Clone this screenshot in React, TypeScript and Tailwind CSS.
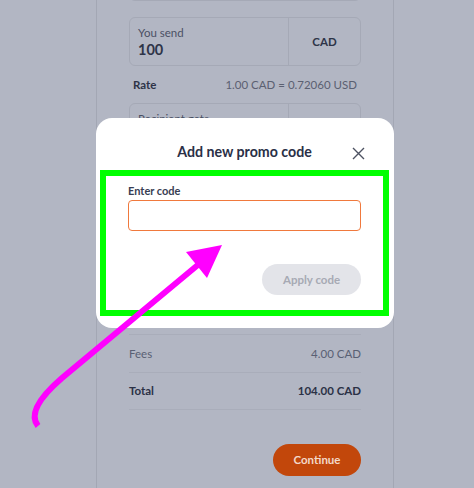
export default function App() {
  return (
    <div className="relative w-[474px] h-[488px] overflow-hidden bg-[#b2b6c3] font-['Lato',sans-serif]">
      {/* page column behind the overlay */}
      <div className="ml-[96px] flex flex-col w-[298px] h-full border-x border-[#a3a7b4] px-[32px]">
        <div className="-mt-[20px] h-[21px] shrink-0 rounded-md border border-[#a5a9b6]"></div>

        <div className="mt-[16px] flex h-[49px] shrink-0 rounded-md border border-[#a5a9b6]">
          <div className="flex flex-1 flex-col justify-center pl-[8px] border-r border-[#a5a9b6]">
            <span className="text-[11.5px] leading-[15px] text-[#4a5063]">You send</span>
            <span className="text-[14.5px] leading-[19px] font-bold text-[#2e3448]">100</span>
          </div>
          <div className="flex w-[71px] items-center justify-center text-[11.5px] font-bold text-[#2e3448]">
            CAD
          </div>
        </div>

        <div className="flex h-[37px] shrink-0 items-center justify-between px-[4px] text-[11.5px]">
          <span className="font-bold text-[#2e3448]">Rate</span>
          <span className="text-[#5b6071]">1.00 CAD = 0.72060 USD</span>
        </div>

        <div className="flex h-[49px] shrink-0 rounded-md border border-[#a5a9b6]">
          <div className="flex flex-1 flex-col justify-center pl-[8px] border-r border-[#a5a9b6]">
            <span className="text-[11.5px] leading-[15px] text-[#4a5063]">Recipient gets</span>
            <span className="text-[14.5px] leading-[19px] font-bold text-[#2e3448]">72.06</span>
          </div>
          <div className="flex w-[71px] items-center justify-center text-[11.5px] font-bold text-[#2e3448]">
            USD
          </div>
        </div>

        <div className="h-[183px] shrink-0 border-b border-[#a9adba]"></div>

        <div className="flex h-[38px] shrink-0 items-center justify-between border-b border-[#a9adba] text-[11.5px] text-[#596073]">
          <span>Fees</span>
          <span>4.00 CAD</span>
        </div>
        <div className="flex h-[37px] shrink-0 items-center justify-between border-b border-[#a9adba] text-[11.5px] font-bold text-[#2b3146]">
          <span>Total</span>
          <span>104.00 CAD</span>
        </div>

        <div className="mt-[34px] flex justify-end">
          <button className="h-[32px] w-[88px] rounded-full bg-[#c2470b] text-[11.5px] font-bold text-[#f3d9c9]">
            Continue
          </button>
        </div>
      </div>

      {/* modal */}
      <div className="absolute left-[96px] top-[118px] w-[298px] h-[210px] rounded-2xl bg-white pl-[4px] pr-[5px]">
        <div className="relative flex h-[52px] items-end justify-center pb-[7px]">
          <h2 className="text-[14.2px] leading-[22px] font-bold text-[#2a3047]">Add new promo code</h2>
          <svg
            className="absolute right-[24px] top-[29px]"
            width="13"
            height="13"
            viewBox="0 0 13 13"
            fill="none"
            stroke="#4d5262"
            strokeWidth="1.4"
          >
            <path d="M1 1L12 12M12 1L1 12" />
          </svg>
        </div>
        <div className="h-[146px] border-[6px] border-[#00ff00] px-[22px] pt-[7px]">
          <label className="block text-[11px] leading-[16px] font-bold text-[#383e53]">Enter code</label>
          <input className="mt-[1px] block h-[31px] w-full rounded-[4px] border-[1.5px] border-[#f0793d] outline-none" />
          <div className="mt-[33px] flex justify-end">
            <button className="h-[31px] w-[99px] rounded-full bg-[#e3e4e9] text-[11.5px] font-bold text-[#a7aab4]">
              Apply code
            </button>
          </div>
        </div>
      </div>

      {/* annotation arrow */}
      <svg className="pointer-events-none absolute inset-0" width="474" height="488">
        <path
          d="M38 426 Q 25 410 62 378 L 199 264"
          fill="none"
          stroke="#ff00ff"
          strokeWidth="6"
        />
        <polygon points="222,245 186,252 207,278" fill="#ff00ff" />
      </svg>
    </div>
  );
}
